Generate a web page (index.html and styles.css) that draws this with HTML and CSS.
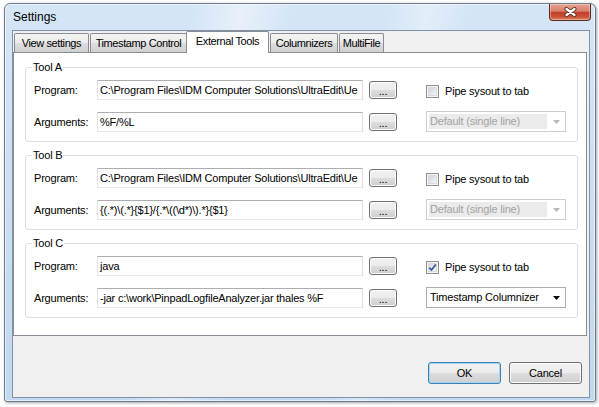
FILE: index.html
```html
<!DOCTYPE html>
<html>
<head>
<meta charset="utf-8">
<title>Settings</title>
<link rel="stylesheet" href="styles.css">
</head>
<body>
<div class="window">
  <div class="titlebar">
    <span class="title">Settings</span>
    <div class="close">
      <svg width="13" height="10" viewBox="0 0 13 10">
        <path d="M2.5 2 L10.5 8 M10.5 2 L2.5 8" stroke="#4a2a24" stroke-width="4" stroke-linecap="round"/>
        <path d="M2.5 2 L10.5 8 M10.5 2 L2.5 8" stroke="#ffffff" stroke-width="2.2" stroke-linecap="round"/>
      </svg>
    </div>
  </div>
  <div class="client">
    <div class="tabs">
      <div class="tab tab-view">View settings</div>
      <div class="tab tab-timestamp">Timestamp Control</div>
      <div class="tab tab-external active">External Tools</div>
      <div class="tab tab-columnizers">Columnizers</div>
      <div class="tab tab-multifile">MultiFile</div>
    </div>
    <div class="panel">
      <div class="group">
        <div class="legend">Tool A</div>
        <div class="row">
          <span class="label">Program:</span>
          <div class="textbox">C:\Program Files\IDM Computer Solutions\UltraEdit\Ue</div>
          <div class="btn small">...</div>
          <div class="check"><span class="box"></span><span>Pipe sysout to tab</span></div>
        </div>
        <div class="row">
          <span class="label">Arguments:</span>
          <div class="textbox">%F/%L</div>
          <div class="btn small">...</div>
          <div class="combo disabled">
            <span class="combo-text">Default (single line)</span>
            <span class="arrow"><svg width="7" height="4" viewBox="0 0 7 4"><path d="M0 0 H7 L3.5 4 Z" fill="#b8b8b8"/></svg></span>
          </div>
        </div>
      </div>
      <div class="group">
        <div class="legend">Tool B</div>
        <div class="row">
          <span class="label">Program:</span>
          <div class="textbox">C:\Program Files\IDM Computer Solutions\UltraEdit\Ue</div>
          <div class="btn small">...</div>
          <div class="check"><span class="box"></span><span>Pipe sysout to tab</span></div>
        </div>
        <div class="row">
          <span class="label">Arguments:</span>
          <div class="textbox">{(.*)\(.*}{$1}/{.*\((\d*)\).*}{$1}</div>
          <div class="btn small">...</div>
          <div class="combo disabled">
            <span class="combo-text">Default (single line)</span>
            <span class="arrow"><svg width="7" height="4" viewBox="0 0 7 4"><path d="M0 0 H7 L3.5 4 Z" fill="#b8b8b8"/></svg></span>
          </div>
        </div>
      </div>
      <div class="group">
        <div class="legend">Tool C</div>
        <div class="row">
          <span class="label">Program:</span>
          <div class="textbox">java</div>
          <div class="btn small">...</div>
          <div class="check"><span class="box checked"><svg width="9" height="9" viewBox="0 0 9 9"><path d="M1.2 4.6 L3.5 7 L7.8 1.5" fill="none" stroke="#3d5a9a" stroke-width="1.8"/></svg></span><span>Pipe sysout to tab</span></div>
        </div>
        <div class="row">
          <span class="label">Arguments:</span>
          <div class="textbox">-jar c:\work\PinpadLogfileAnalyzer.jar thales %F</div>
          <div class="btn small">...</div>
          <div class="combo">
            <span class="combo-text">Timestamp Columnizer</span>
            <span class="arrow"><svg width="7" height="4" viewBox="0 0 7 4"><path d="M0 0 H7 L3.5 4 Z" fill="#000"/></svg></span>
          </div>
        </div>
      </div>
    </div>
    <div class="buttons">
      <div class="btn dlg default">OK</div>
      <div class="btn dlg">Cancel</div>
    </div>
  </div>
</div>
</body>
</html>
```

FILE: styles.css
```css
body {
  margin: 0;
  width: 599px;
  height: 407px;
  overflow: hidden;
  background: #fdfdfd;
  font-family: "Liberation Sans", Arial, sans-serif;
  font-size: 11px;
  letter-spacing: -0.2px;
  color: #000;
}

.window {
  margin: 3px 0 0 4px;
  width: 592px;
  height: 399px;
  box-sizing: border-box;
  border: 1px solid #6c7b8d;
  border-radius: 6px 6px 3px 3px;
  background:
    linear-gradient(100deg, rgba(255,255,255,0) 0%, rgba(255,255,255,0) 28%, rgba(255,255,255,.45) 36%, rgba(255,255,255,0) 44%, rgba(255,255,255,0) 58%, rgba(255,255,255,.35) 64%, rgba(255,255,255,0) 71%),
    linear-gradient(#d4e5f6, #c2d8ef);
  box-shadow: inset 0 0 0 1px rgba(255,255,255,.55), 1px 1px 3px rgba(0,0,0,.35);
  display: flex;
  flex-direction: column;
}

.titlebar {
  height: 26px;
  display: flex;
  align-items: flex-start;
  padding-left: 8px;
}

.title {
  font-size: 12px;
  letter-spacing: 0;
  line-height: 26px;
  margin-right: auto;
  color: #000;
}

.close {
  width: 42px;
  height: 17px;
  margin-right: 4px;
  box-sizing: border-box;
  border: 1px solid #5b2b22;
  border-top: none;
  border-radius: 0 0 4px 4px;
  background: linear-gradient(#e6a291, #d7806c 45%, #c23f2a 52%, #cb5238 80%, #dc8366);
  box-shadow: inset 0 0 0 1px rgba(255,255,255,.35);
  display: flex;
  align-items: center;
  justify-content: center;
}

.client {
  margin: 0 5px 0 7px;
  height: 368px;
  box-sizing: border-box;
  border: 1px solid #8092a8;
  background: #f0f0f0;
  display: flex;
  flex-direction: column;
}

.tabs {
  display: flex;
  align-items: flex-end;
  height: 21px;
  padding-left: 1px;
  gap: 1px;
}

.tab {
  height: 19px;
  box-sizing: border-box;
  border: 1px solid #898c95;
  border-bottom: none;
  border-radius: 2px 2px 0 0;
  text-align: center;
  line-height: 18px;
  letter-spacing: -0.4px;
  white-space: nowrap;
  background: linear-gradient(#f3f3f3, #ececec 50%, #dedede 50%, #d0d0d0);
}

.tab-view { width: 75px; }
.tab-timestamp { width: 97px; }
.tab-external { width: 83px; }
.tab-columnizers { width: 68px; }
.tab-multifile { width: 45px; }

.tab.active {
  height: 22px;
  margin: 0 0 -1px -2px;
  line-height: 19px;
  background: #fff;
  position: relative;
  z-index: 1;
}

.panel {
  width: 574px;
  height: 284px;
  box-sizing: border-box;
  border: 1px solid #898c95;
  background: #fff;
  padding: 14px 0 0 11px;
  display: flex;
  flex-direction: column;
  gap: 13px;
}

.group {
  position: relative;
  width: 553px;
  height: 75px;
  box-sizing: border-box;
  border: 1px solid #d5dfe5;
  border-radius: 3px;
  padding: 12px 0 0 8px;
  display: flex;
  flex-direction: column;
  gap: 12px;
}

.legend {
  position: absolute;
  top: -7px;
  left: 6px;
  padding: 0 1px;
  background: #fff;
  line-height: 13px;
}

.row {
  display: flex;
  align-items: center;
  height: 20px;
}

.label {
  width: 63px;
  flex: none;
}

.textbox {
  width: 266px;
  height: 20px;
  flex: none;
  box-sizing: border-box;
  border: 1px solid;
  border-color: #abadb3 #dbdfe6 #e3e9ef #e2e3ea;
  background: #fff;
  padding: 0 2px;
  line-height: 18px;
  white-space: nowrap;
  overflow: hidden;
}

.btn {
  box-sizing: border-box;
  border: 1px solid #707070;
  border-radius: 3px;
  background: linear-gradient(#f2f2f2, #ebebeb 50%, #dddddd 50%, #cfcfcf);
  box-shadow: inset 0 0 0 1px #fbfbfb;
  display: flex;
  align-items: center;
  justify-content: center;
  flex: none;
}

.btn.small {
  width: 28px;
  height: 18px;
  margin-left: 6px;
  line-height: 18px;
  padding-top: 2px;
}

.btn.dlg {
  width: 73px;
  height: 22px;
}

.btn.default {
  border-color: #3c7fb1;
  box-shadow: inset 0 0 0 1px #a3d7f7;
}

.check {
  margin-left: 29px;
  margin-top: 2px;
  display: flex;
  align-items: center;
  gap: 6px;
  white-space: nowrap;
}

.box {
  width: 13px;
  height: 13px;
  box-sizing: border-box;
  border: 1px solid #8e8f8f;
  background: linear-gradient(135deg, #c4c8ce, #eeeff1 70%, #f6f6f6);
  box-shadow: inset 0 0 0 1px #f4f4f4, inset 0 0 0 2px #d8dbde;
  display: flex;
  align-items: center;
  justify-content: center;
}

.box.checked {
  background: linear-gradient(135deg, #cfd4da, #f0f1f2 70%, #f8f8f8);
}

.combo {
  margin-left: 29px;
  margin-top: -1px;
  width: 140px;
  height: 21px;
  flex: none;
  box-sizing: border-box;
  border: 1px solid #abadb3;
  background: #fff;
  padding: 2px 0 2px 2px;
  display: flex;
  align-items: center;
}

.combo-text {
  flex: 1;
  height: 15px;
  line-height: 15px;
  padding-left: 1px;
  white-space: nowrap;
  overflow: hidden;
}

.combo.disabled {
  border-color: #cdcdcd;
}

.combo.disabled .combo-text {
  background: #ebebeb;
  color: #a2a2a2;
}

.arrow {
  width: 18px;
  flex: none;
  display: flex;
  justify-content: center;
}

.buttons {
  display: flex;
  justify-content: flex-end;
  gap: 8px;
  padding: 26px 7px 0 0;
}
```
